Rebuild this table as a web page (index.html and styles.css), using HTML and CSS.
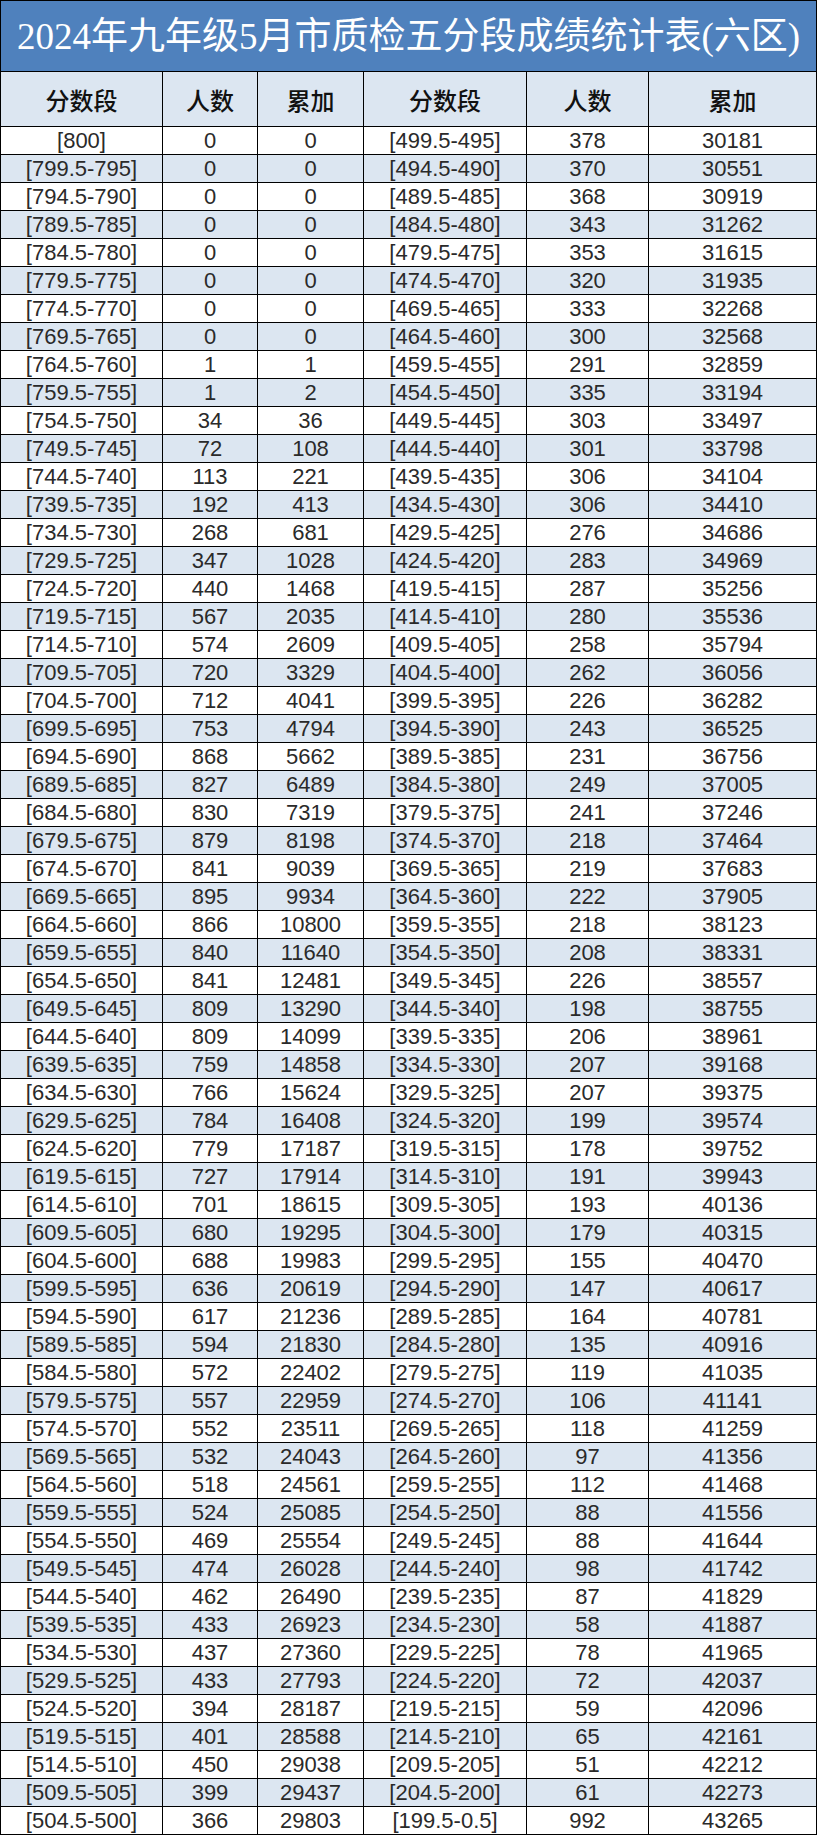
FILE: index.html
```html
<!DOCTYPE html>
<html lang="zh-CN">
<head>
<meta charset="utf-8">
<title>2024年九年级5月市质检五分段成绩统计表(六区)</title>
<link rel="stylesheet" href="styles.css">
</head>
<body>
<table class="sheet">
<colgroup>
<col class="c-seg"><col class="c-num"><col class="c-sum"><col class="c-seg2"><col class="c-num2"><col class="c-sum2">
</colgroup>
<thead>
<tr class="title-row"><th colspan="6" class="title">2024年九年级5月市质检五分段成绩统计表(六区)</th></tr>
<tr class="head-row"><th>分数段</th><th>人数</th><th>累加</th><th>分数段</th><th>人数</th><th>累加</th></tr>
</thead>
<tbody>
<tr><td>[800]</td><td>0</td><td>0</td><td>[499.5-495]</td><td>378</td><td>30181</td></tr>
<tr><td>[799.5-795]</td><td>0</td><td>0</td><td>[494.5-490]</td><td>370</td><td>30551</td></tr>
<tr><td>[794.5-790]</td><td>0</td><td>0</td><td>[489.5-485]</td><td>368</td><td>30919</td></tr>
<tr><td>[789.5-785]</td><td>0</td><td>0</td><td>[484.5-480]</td><td>343</td><td>31262</td></tr>
<tr><td>[784.5-780]</td><td>0</td><td>0</td><td>[479.5-475]</td><td>353</td><td>31615</td></tr>
<tr><td>[779.5-775]</td><td>0</td><td>0</td><td>[474.5-470]</td><td>320</td><td>31935</td></tr>
<tr><td>[774.5-770]</td><td>0</td><td>0</td><td>[469.5-465]</td><td>333</td><td>32268</td></tr>
<tr><td>[769.5-765]</td><td>0</td><td>0</td><td>[464.5-460]</td><td>300</td><td>32568</td></tr>
<tr><td>[764.5-760]</td><td>1</td><td>1</td><td>[459.5-455]</td><td>291</td><td>32859</td></tr>
<tr><td>[759.5-755]</td><td>1</td><td>2</td><td>[454.5-450]</td><td>335</td><td>33194</td></tr>
<tr><td>[754.5-750]</td><td>34</td><td>36</td><td>[449.5-445]</td><td>303</td><td>33497</td></tr>
<tr><td>[749.5-745]</td><td>72</td><td>108</td><td>[444.5-440]</td><td>301</td><td>33798</td></tr>
<tr><td>[744.5-740]</td><td>113</td><td>221</td><td>[439.5-435]</td><td>306</td><td>34104</td></tr>
<tr><td>[739.5-735]</td><td>192</td><td>413</td><td>[434.5-430]</td><td>306</td><td>34410</td></tr>
<tr><td>[734.5-730]</td><td>268</td><td>681</td><td>[429.5-425]</td><td>276</td><td>34686</td></tr>
<tr><td>[729.5-725]</td><td>347</td><td>1028</td><td>[424.5-420]</td><td>283</td><td>34969</td></tr>
<tr><td>[724.5-720]</td><td>440</td><td>1468</td><td>[419.5-415]</td><td>287</td><td>35256</td></tr>
<tr><td>[719.5-715]</td><td>567</td><td>2035</td><td>[414.5-410]</td><td>280</td><td>35536</td></tr>
<tr><td>[714.5-710]</td><td>574</td><td>2609</td><td>[409.5-405]</td><td>258</td><td>35794</td></tr>
<tr><td>[709.5-705]</td><td>720</td><td>3329</td><td>[404.5-400]</td><td>262</td><td>36056</td></tr>
<tr><td>[704.5-700]</td><td>712</td><td>4041</td><td>[399.5-395]</td><td>226</td><td>36282</td></tr>
<tr><td>[699.5-695]</td><td>753</td><td>4794</td><td>[394.5-390]</td><td>243</td><td>36525</td></tr>
<tr><td>[694.5-690]</td><td>868</td><td>5662</td><td>[389.5-385]</td><td>231</td><td>36756</td></tr>
<tr><td>[689.5-685]</td><td>827</td><td>6489</td><td>[384.5-380]</td><td>249</td><td>37005</td></tr>
<tr><td>[684.5-680]</td><td>830</td><td>7319</td><td>[379.5-375]</td><td>241</td><td>37246</td></tr>
<tr><td>[679.5-675]</td><td>879</td><td>8198</td><td>[374.5-370]</td><td>218</td><td>37464</td></tr>
<tr><td>[674.5-670]</td><td>841</td><td>9039</td><td>[369.5-365]</td><td>219</td><td>37683</td></tr>
<tr><td>[669.5-665]</td><td>895</td><td>9934</td><td>[364.5-360]</td><td>222</td><td>37905</td></tr>
<tr><td>[664.5-660]</td><td>866</td><td>10800</td><td>[359.5-355]</td><td>218</td><td>38123</td></tr>
<tr><td>[659.5-655]</td><td>840</td><td>11640</td><td>[354.5-350]</td><td>208</td><td>38331</td></tr>
<tr><td>[654.5-650]</td><td>841</td><td>12481</td><td>[349.5-345]</td><td>226</td><td>38557</td></tr>
<tr><td>[649.5-645]</td><td>809</td><td>13290</td><td>[344.5-340]</td><td>198</td><td>38755</td></tr>
<tr><td>[644.5-640]</td><td>809</td><td>14099</td><td>[339.5-335]</td><td>206</td><td>38961</td></tr>
<tr><td>[639.5-635]</td><td>759</td><td>14858</td><td>[334.5-330]</td><td>207</td><td>39168</td></tr>
<tr><td>[634.5-630]</td><td>766</td><td>15624</td><td>[329.5-325]</td><td>207</td><td>39375</td></tr>
<tr><td>[629.5-625]</td><td>784</td><td>16408</td><td>[324.5-320]</td><td>199</td><td>39574</td></tr>
<tr><td>[624.5-620]</td><td>779</td><td>17187</td><td>[319.5-315]</td><td>178</td><td>39752</td></tr>
<tr><td>[619.5-615]</td><td>727</td><td>17914</td><td>[314.5-310]</td><td>191</td><td>39943</td></tr>
<tr><td>[614.5-610]</td><td>701</td><td>18615</td><td>[309.5-305]</td><td>193</td><td>40136</td></tr>
<tr><td>[609.5-605]</td><td>680</td><td>19295</td><td>[304.5-300]</td><td>179</td><td>40315</td></tr>
<tr><td>[604.5-600]</td><td>688</td><td>19983</td><td>[299.5-295]</td><td>155</td><td>40470</td></tr>
<tr><td>[599.5-595]</td><td>636</td><td>20619</td><td>[294.5-290]</td><td>147</td><td>40617</td></tr>
<tr><td>[594.5-590]</td><td>617</td><td>21236</td><td>[289.5-285]</td><td>164</td><td>40781</td></tr>
<tr><td>[589.5-585]</td><td>594</td><td>21830</td><td>[284.5-280]</td><td>135</td><td>40916</td></tr>
<tr><td>[584.5-580]</td><td>572</td><td>22402</td><td>[279.5-275]</td><td>119</td><td>41035</td></tr>
<tr><td>[579.5-575]</td><td>557</td><td>22959</td><td>[274.5-270]</td><td>106</td><td>41141</td></tr>
<tr><td>[574.5-570]</td><td>552</td><td>23511</td><td>[269.5-265]</td><td>118</td><td>41259</td></tr>
<tr><td>[569.5-565]</td><td>532</td><td>24043</td><td>[264.5-260]</td><td>97</td><td>41356</td></tr>
<tr><td>[564.5-560]</td><td>518</td><td>24561</td><td>[259.5-255]</td><td>112</td><td>41468</td></tr>
<tr><td>[559.5-555]</td><td>524</td><td>25085</td><td>[254.5-250]</td><td>88</td><td>41556</td></tr>
<tr><td>[554.5-550]</td><td>469</td><td>25554</td><td>[249.5-245]</td><td>88</td><td>41644</td></tr>
<tr><td>[549.5-545]</td><td>474</td><td>26028</td><td>[244.5-240]</td><td>98</td><td>41742</td></tr>
<tr><td>[544.5-540]</td><td>462</td><td>26490</td><td>[239.5-235]</td><td>87</td><td>41829</td></tr>
<tr><td>[539.5-535]</td><td>433</td><td>26923</td><td>[234.5-230]</td><td>58</td><td>41887</td></tr>
<tr><td>[534.5-530]</td><td>437</td><td>27360</td><td>[229.5-225]</td><td>78</td><td>41965</td></tr>
<tr><td>[529.5-525]</td><td>433</td><td>27793</td><td>[224.5-220]</td><td>72</td><td>42037</td></tr>
<tr><td>[524.5-520]</td><td>394</td><td>28187</td><td>[219.5-215]</td><td>59</td><td>42096</td></tr>
<tr><td>[519.5-515]</td><td>401</td><td>28588</td><td>[214.5-210]</td><td>65</td><td>42161</td></tr>
<tr><td>[514.5-510]</td><td>450</td><td>29038</td><td>[209.5-205]</td><td>51</td><td>42212</td></tr>
<tr><td>[509.5-505]</td><td>399</td><td>29437</td><td>[204.5-200]</td><td>61</td><td>42273</td></tr>
<tr><td>[504.5-500]</td><td>366</td><td>29803</td><td>[199.5-0.5]</td><td>992</td><td>43265</td></tr>
</tbody>
</table>
</body>
</html>
```
FILE: styles.css
```css
html, body {
  margin: 0;
  padding: 0;
  background: #ffffff;
}

.sheet {
  border-collapse: collapse;
  table-layout: fixed;
  width: 816px;
}

.c-seg { width: 162px; }
.c-num { width: 95px; }
.c-sum { width: 106px; }
.c-seg2 { width: 163px; }
.c-num2 { width: 122px; }
.c-sum2 { width: 168px; }

.sheet th,
.sheet td {
  border: 1px solid #000000;
  padding: 0;
  text-align: center;
  white-space: nowrap;
  overflow: hidden;
}

.title-row { height: 71px; }

.title {
  background: #4f81bd;
  color: #ffffff;
  font-family: "Liberation Serif", "Noto Sans CJK SC", serif;
  font-weight: 400;
  font-size: 37px;
  line-height: 1;
  vertical-align: middle;
  padding-left: 4px;
}

.head-row { height: 55px; }

.head-row th {
  background: #dce6f1;
  color: #111111;
  font-family: "Noto Sans CJK SC", serif;
  font-weight: 500;
  font-size: 24px;
  vertical-align: middle;
}

.sheet tbody tr { height: 28px; }

.sheet tbody td {
  font-family: "Liberation Sans", "Noto Sans CJK SC", sans-serif;
  font-size: 22px;
  line-height: 24px;
  color: #2a2a2a;
  vertical-align: bottom;
  padding-bottom: 1px;
}

.sheet tbody tr:nth-child(even) td {
  background: #dce6f1;
}
```
